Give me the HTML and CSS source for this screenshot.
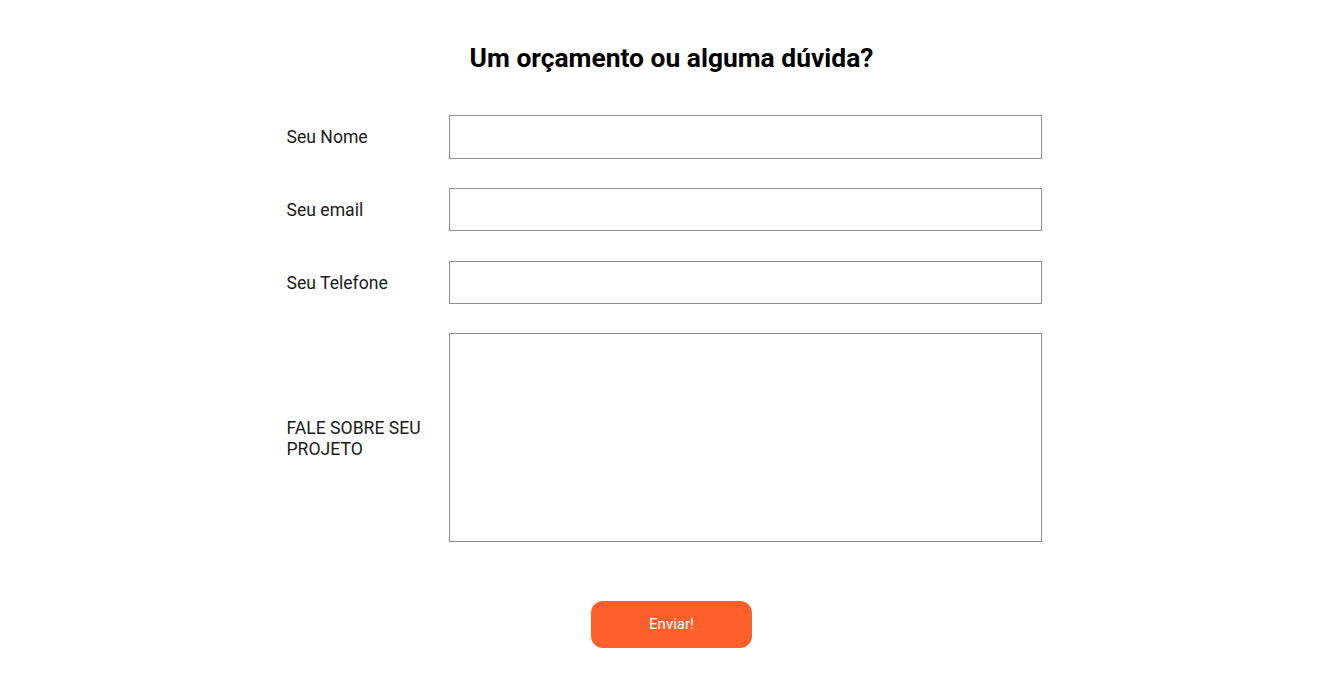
FILE: index.html
```html
<!DOCTYPE html>
<html lang="pt-BR">
<head>
<meta charset="utf-8">
<title>Contato</title>
<link rel="stylesheet" href="styles.css">
</head>
<body>
<section class="contact">
  <h2 class="contact-title">Um orçamento ou alguma dúvida?</h2>
  <form class="contact-form">
    <div class="form-row">
      <label class="form-label" for="nome">Seu Nome</label>
      <input class="form-input" id="nome" type="text">
    </div>
    <div class="form-row">
      <label class="form-label" for="email">Seu email</label>
      <input class="form-input" id="email" type="email">
    </div>
    <div class="form-row">
      <label class="form-label" for="tel">Seu Telefone</label>
      <input class="form-input" id="tel" type="tel">
    </div>
    <div class="form-row">
      <label class="form-label" for="msg">FALE SOBRE SEU PROJETO</label>
      <textarea class="form-input form-textarea" id="msg"></textarea>
    </div>
    <div class="form-actions">
      <button class="submit-btn" type="submit">Enviar!</button>
    </div>
  </form>
</section>
</body>
</html>
```
FILE: styles.css
```css
* { box-sizing: border-box; }
body {
  margin: 0;
  background: #fff;
  font-family: Roboto, "Liberation Sans", Arial, sans-serif;
  color: #1a1a1a;
}
.contact {
  padding-top: 40px;
}
.contact-title {
  margin: 0 0 39px;
  text-align: center;
  font-size: 26.4px;
  font-weight: 700;
  line-height: 36px;
  color: #000;
}
.contact-form {
  width: 770px;
  margin: 0 auto;
  display: flex;
  flex-direction: column;
  gap: 29.25px;
}
.form-row {
  display: grid;
  grid-template-columns: 162px 593px;
  align-items: center;
}
.form-label {
  font-size: 17.6px;
  line-height: 21px;
  padding-top: 2px;
  padding-right: 20px;
}
.form-input {
  display: block;
  width: 593px;
  height: 43.5px;
  border: 1px solid #8f8f8f;
  border-radius: 0;
  background: #fff;
  font: inherit;
  margin: 0;
}
.form-textarea {
  height: 209px;
  resize: none;
}
.form-actions {
  display: flex;
  justify-content: center;
  padding-top: 29.2px;
  margin-left: -14px;
  margin-right: -14px;
}
.submit-btn {
  width: 161px;
  height: 47px;
  border: none;
  border-radius: 12px;
  background: #ff5f2a;
  color: #fff;
  font-family: Roboto, "Liberation Sans", Arial, sans-serif;
  font-size: 15px;
  cursor: pointer;
}
```
